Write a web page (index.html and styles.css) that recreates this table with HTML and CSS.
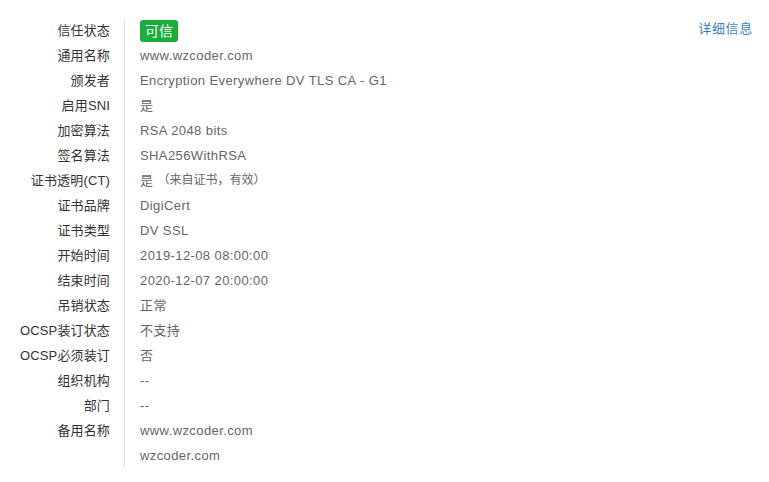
FILE: index.html
```html
<!DOCTYPE html>
<html lang="zh-CN">
<head>
<meta charset="utf-8">
<title>证书信息</title>
<link rel="stylesheet" href="styles.css">
</head>
<body>
<div class="page">
  <div class="table">
    <div class="label">信任状态</div><div class="value"><span class="badge">可信</span></div>
    <div class="label">通用名称</div><div class="value">www.wzcoder.com</div>
    <div class="label">颁发者</div><div class="value">Encryption Everywhere DV TLS CA - G1</div>
    <div class="label">启用SNI</div><div class="value">是</div>
    <div class="label">加密算法</div><div class="value">RSA 2048 bits</div>
    <div class="label">签名算法</div><div class="value">SHA256WithRSA</div>
    <div class="label">证书透明(CT)</div><div class="value">是 <span class="note">（来自证书，有效）</span></div>
    <div class="label">证书品牌</div><div class="value">DigiCert</div>
    <div class="label">证书类型</div><div class="value">DV SSL</div>
    <div class="label">开始时间</div><div class="value">2019-12-08 08:00:00</div>
    <div class="label">结束时间</div><div class="value">2020-12-07 20:00:00</div>
    <div class="label">吊销状态</div><div class="value">正常</div>
    <div class="label">OCSP装订状态</div><div class="value">不支持</div>
    <div class="label">OCSP必须装订</div><div class="value">否</div>
    <div class="label">组织机构</div><div class="value">--</div>
    <div class="label">部门</div><div class="value">--</div>
    <div class="label">备用名称</div><div class="value">www.wzcoder.com</div>
    <div class="label"></div><div class="value">wzcoder.com</div>
  </div>
  <a class="more" href="#">详细信息</a>
</div>
</body>
</html>
```
FILE: styles.css
```css
html, body {
  margin: 0;
  padding: 0;
  background: #fff;
}
body {
  font-family: "Liberation Sans", "Noto Sans CJK SC", sans-serif;
  font-size: 13px;
  color: #333;
}
.page {
  display: flex;
  align-items: flex-start;
  padding: 18px 17px 0 0;
}
.table {
  display: grid;
  grid-template-columns: 124px auto;
  grid-auto-rows: 25px;
}
.label {
  text-align: right;
  padding-right: 14px;
  line-height: 25px;
  color: #333;
  white-space: nowrap;
  letter-spacing: 0.15px;
}
.value {
  border-left: 1px solid #e2e2e2;
  padding-left: 15px;
  line-height: 25px;
  color: #666;
  white-space: nowrap;
  display: flex;
  align-items: center;
  letter-spacing: 0.4px;
}
.note {
  font-size: 12px;
  margin-left: 4px;
  letter-spacing: 0;
}
.badge {
  display: inline-block;
  background: #1aad3a;
  color: #fff;
  border-radius: 3px;
  height: 22px;
  line-height: 22px;
  padding: 0 5px;
  font-size: 14px;
  letter-spacing: 0;
}
.more {
  margin-left: auto;
  margin-top: 1px;
  color: #3b82c4;
  text-decoration: none;
  font-size: 13px;
  line-height: 20px;
  letter-spacing: 0.7px;
  margin-right: -1px;
}
```
